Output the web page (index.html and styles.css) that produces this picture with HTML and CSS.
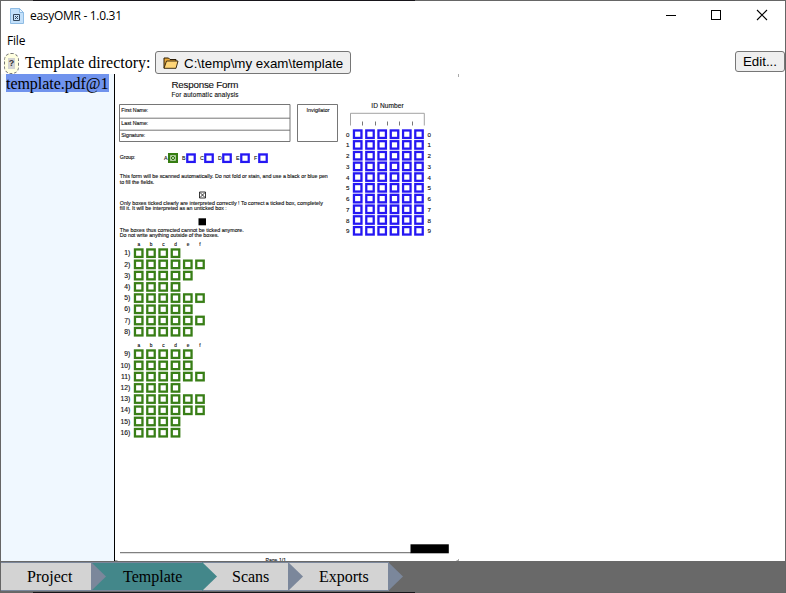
FILE: index.html
```
<!DOCTYPE html>
<html lang="en">
<head>
<meta charset="utf-8">
<title>easyOMR - 1.0.31</title>
<link rel="stylesheet" href="styles.css">
</head>
<body>
<div class="window">
  <header class="titlebar">
    <svg class="app-icon" width="14" height="16" viewBox="0 0 14 16">
      <path d="M.5.5h9l4 4v11H.5z" fill="#c3e0fa" stroke="#8fbce4"/>
      <path d="M9.500.500v4h4z" fill="#e8f4ff" stroke="#8fbce4"/>
      <path d="M3.500 6.500h6v6h-6zM5 8l3 3M8 8l-3 3" fill="none" stroke="#35465a"/>
    </svg>
    <span class="title">easyOMR - 1.0.31</span>
    <svg class="controls" width="102" height="12" viewBox="0 0 102 12" fill="none" stroke="#000">
      <path d="M0 6.500h10M45.500 1.500h9v9h-9z" shape-rendering="crispEdges"/>
      <path d="M91 1l10 10M101 1L91 11" stroke-width="1.100"/>
    </svg>
  </header>
  <nav class="menubar">File</nav>
  <div class="toolbar">
    <span class="help"><b>?</b></span>
    <span class="dir-label">Template directory:</span>
    <button class="dir-button">
      <svg width="16" height="12" viewBox="0 0 16 12">
        <path d="M1 11V1h4.500l1.500 1.500h6V5" fill="#e9a93b" stroke="#2b1c05"/>
        <path d="M1 11.300L3.500 4H15l-2 7.300z" fill="#ffd678" stroke="#2b1c05" stroke-width=".9"/>
      </svg>
      <span>C:\temp\my exam\template</span>
    </button>
    <button class="edit-button">Edit...</button>
  </div>
  <main class="content">
    <aside class="sidebar"><span class="selected">template.pdf@1</span></aside>
    <section class="preview">
      <svg class="sheet" width="345" height="487" viewBox="115 74 345 487">
        <defs>
          <g id="box"><rect width="10" height="10" class="halo"/><rect x="1.300" y="1.300" width="7.400" height="7.400" class="frame"/></g>
          <g id="r4"><use href="#box"/><use href="#box" x="12.300"/><use href="#box" x="24.500"/><use href="#box" x="36.800"/></g>
          <g id="r5"><use href="#r4"/><use href="#box" x="49.100"/></g>
          <g id="r6"><use href="#r5"/><use href="#box" x="61.300"/></g>
        </defs>
        <text x="171.500" y="87.700" font-size="9.800" textLength="67">Response Form</text>
        <text x="171.500" y="97" font-size="6.300" textLength="67">For automatic analysis</text>
        <g class="lines">
          <path d="M119.500 104.500H290V141.500H119.500zM119.500 118.200H290M119.500 130.200H290M297.500 104.500h40v37h-40z"/>
          <path d="M350.500 125.500v-12.200h73.800v12.200" stroke="#999"/>
          <path d="M362.500 121.500v4M375.500 121.500v4M387.500 121.500v4M399.500 121.500v4M412.500 121.500v4"/>
        </g>
        <g font-size="5.300">
          <text x="121.300" y="112.200" textLength="27">First Name:</text>
          <text x="121.300" y="124.700" textLength="27">Last Name:</text>
          <text x="121.300" y="137.200" textLength="24">Signature:</text>
          <text x="306.500" y="112.200" textLength="23">Invigilator</text>
          <text x="119.800" y="159" textLength="15.500">Group:</text>
          <text x="164" y="160">A</text><text x="182" y="160">B</text><text x="200" y="160">C</text><text x="218" y="160">D</text><text x="236" y="160">E</text><text x="254" y="160">F</text>
          <text x="119.800" y="178.300" textLength="208">This form will be scanned automatically. Do not fold or stain, and use a black or blue pen</text>
          <text x="119.800" y="183.500" textLength="34.500">to fill the fields.</text>
          <text x="119.800" y="205" textLength="203">Only boxes ticked clearly are interpreted correctly ! To correct a ticked box, completely</text>
          <text x="119.800" y="210.300" textLength="107">fill it. It will be interpreted as an unticked box :</text>
          <text x="119.800" y="232" textLength="124">The boxes thus corrected cannot be ticked anymore.</text>
          <text x="119.800" y="237.300" textLength="99">Do not write anything outside of the boxes.</text>
        </g>
        <text x="371.300" y="107.500" font-size="6.600" textLength="32.500">ID Number</text>
        <rect x="168" y="153" width="10" height="10" fill="#367d12"/>
        <path d="M170.500 155.500h5v5h-5zM171 156l4 4M175 156l-4 4" fill="none" stroke="#dce8d7" stroke-width=".7"/>
        <g class="blue">
          <use href="#box" x="186" y="153.200"/><use href="#box" x="204" y="153.200"/><use href="#box" x="222" y="153.200"/><use href="#box" x="240" y="153.200"/><use href="#box" x="258" y="153.200"/>
          <use href="#r6" x="352.700" y="129.200"/><use href="#r6" x="352.700" y="139.900"/><use href="#r6" x="352.700" y="150.700"/><use href="#r6" x="352.700" y="161.400"/><use href="#r6" x="352.700" y="172.100"/>
          <use href="#r6" x="352.700" y="182.800"/><use href="#r6" x="352.700" y="193.600"/><use href="#r6" x="352.700" y="204.300"/><use href="#r6" x="352.700" y="215"/><use href="#r6" x="352.700" y="225.800"/>
        </g>
        <g class="digits">
          <text x="346" y="136.700">0</text><text x="346" y="147.400">1</text><text x="346" y="158.200">2</text><text x="346" y="168.900">3</text><text x="346" y="179.600">4</text><text x="346" y="190.300">5</text><text x="346" y="201.100">6</text><text x="346" y="211.800">7</text><text x="346" y="222.500">8</text><text x="346" y="233.300">9</text>
          <text x="427.500" y="136.700">0</text><text x="427.500" y="147.400">1</text><text x="427.500" y="158.200">2</text><text x="427.500" y="168.900">3</text><text x="427.500" y="179.600">4</text><text x="427.500" y="190.300">5</text><text x="427.500" y="201.100">6</text><text x="427.500" y="211.800">7</text><text x="427.500" y="222.500">8</text><text x="427.500" y="233.300">9</text>
        </g>
        <path d="M199.500 192h6v6h-6zM200 192.500l5 5M205 192.500l-5 5" fill="none" stroke="#222" stroke-width=".9"/>
        <rect x="198.500" y="218.300" width="7.500" height="7" fill="#000"/>
        <g class="letters">
          <text x="138.800" y="246.300">a</text><text x="151" y="246.300">b</text><text x="163.500" y="246.300">c</text><text x="175.700" y="246.300">d</text><text x="188" y="246.300">e</text><text x="200" y="246.300">f</text>
          <text x="138.800" y="347.300">a</text><text x="151" y="347.300">b</text><text x="163.500" y="347.300">c</text><text x="175.700" y="347.300">d</text><text x="188" y="347.300">e</text><text x="200" y="347.300">f</text>
        </g>
        <g class="green">
          <use href="#r4" x="133.700" y="248.200"/><use href="#r6" x="133.700" y="259.400"/><use href="#r5" x="133.700" y="270.600"/><use href="#r4" x="133.700" y="281.900"/><use href="#r6" x="133.700" y="293.100"/><use href="#r5" x="133.700" y="304.300"/><use href="#r6" x="133.700" y="315.500"/><use href="#r5" x="133.700" y="326.700"/>
          <use href="#r5" x="133.700" y="349.200"/><use href="#r5" x="133.700" y="360.400"/><use href="#r6" x="133.700" y="371.600"/><use href="#r4" x="133.700" y="382.900"/><use href="#r6" x="133.700" y="394.100"/><use href="#r6" x="133.700" y="405.300"/><use href="#r4" x="133.700" y="416.500"/><use href="#r4" x="133.700" y="427.700"/>
        </g>
        <g class="numbers">
          <text x="130.300" y="255.300">1)</text><text x="130.300" y="266.500">2)</text><text x="130.300" y="277.700">3)</text><text x="130.300" y="289">4)</text><text x="130.300" y="300.200">5)</text><text x="130.300" y="311.400">6)</text><text x="130.300" y="322.600">7)</text><text x="130.300" y="333.800">8)</text>
          <text x="130.300" y="356.300">9)</text><text x="130.300" y="367.500">10)</text><text x="130.300" y="378.700">11)</text><text x="130.300" y="390">12)</text><text x="130.300" y="401.200">13)</text><text x="130.300" y="412.400">14)</text><text x="130.300" y="423.600">15)</text><text x="130.300" y="434.800">16)</text>
        </g>
        <path d="M120 552.700h291" stroke="#808080" stroke-width="1.300"/>
        <rect x="410.500" y="544.300" width="38.300" height="9" fill="#000"/>
        <text x="265.500" y="561.500" font-size="5" textLength="20.500">Page 1/1</text>
        <path d="M458.500 74v3M456.500 560.500h2.500M458.500 559v2M115 560.500h2.500" stroke="#aaa"/>
      </svg>
    </section>
  </main>
  <nav class="steps">
    <a class="step project">Project</a>
    <a class="step template active">Template</a>
    <a class="step scans">Scans</a>
    <a class="step exports">Exports</a>
  </nav>
</div>
</body>
</html>
```
FILE: styles.css
```
* { box-sizing: border-box; }
body { margin: 0; background: #fff; color: #000; }
.window {
  width: 786px; height: 593px; overflow: hidden;
  display: flex; flex-direction: column;
  border: 1px solid #696969;
  border-image: linear-gradient(90deg, #666 0 33px, #17151a 33px 415px, #666 415px) 1;
  border-image-width: 1px;
}
.titlebar { height: 30px; display: flex; align-items: center; padding: 0 17px 2px 9px; }
.app-icon { margin-top: 1px; }
.title { margin-left: 6px; font: 12px "Open Sans", sans-serif; letter-spacing: -.3px; flex: 1; }
.menubar { height: 20px; padding: 2px 0 0 6px; font: 12px/16px "Open Sans", sans-serif; letter-spacing: -.2px; }
.toolbar { height: 23px; display: flex; align-items: flex-start; }
.help {
  width: 15px; height: 21px; margin: 2px 0 0 3px; padding: 4px 3px;
  border: 1px dashed #777; border-radius: 7px; background: #ffffe0;
}
.help b { display: block; height: 11px; background: #d3d3d3; font: bold 9px/11px "Liberation Sans", sans-serif; text-align: center; color: #333; }
.dir-label { margin-left: 6px; width: 130px; font: 16px/24px "Liberation Serif", serif; white-space: nowrap; }
button {
  border: 1px solid #767676; border-radius: 3px; background: #efefef;
  font: 13.33px "Liberation Sans", sans-serif; color: #000; padding: 0; white-space: nowrap;
}
.dir-button { width: 196px; height: 23px; padding: 1px 0 0 7px; display: flex; align-items: center; gap: 5px; }
.edit-button { width: 50px; height: 21px; margin-left: auto; }
.content { height: 487px; display: flex; }
.sidebar { width: 114px; background: #f0f8ff; border-right: 1px solid #000; padding-left: 5px; }
.selected { display: block; width: 103px; height: 18px; background: #7093ed; font: 16px/19px "Liberation Serif", serif; letter-spacing: -.05px; white-space: nowrap; }
.preview { flex: 1; background: #fff; }
.sheet { display: block; font-family: "Liberation Sans", sans-serif; }
.sheet text { fill: #111; stroke: #111; stroke-width: .12px; }
.halo { fill: currentColor; opacity: .3; }
.frame { fill: #fff; stroke: currentColor; stroke-width: 2.2; }
.blue { color: #2517f3; }
.green { color: #387e16; }
.lines { fill: none; stroke: #666; stroke-width: .9; }
.digits { font-size: 6.2px; }
.numbers { font-size: 6.8px; text-anchor: end; }
.letters { font-size: 4.8px; text-anchor: middle; }
.steps { height: 31px; background: #696969; padding: 1px 0; display: flex; }
.step {
  position: relative; height: 29px; background: #d3d3d3;
  border: solid #7b879b; border-width: 1px 1px 1px 0;
  font: 16px/28px "Liberation Serif", serif; white-space: nowrap;
}
.step::after {
  content: ""; position: absolute; z-index: 1; left: 100%; top: -1px;
  width: 15px; height: 29px; background: #7b879b;
  clip-path: polygon(0 0, 100% 50%, 0 100%);
}
.project { width: 91px; padding-left: 26px; }
.template { width: 111px; padding-left: 31px; }
.scans { width: 86px; padding-left: 29px; }
.exports { width: 100px; padding-left: 30px; }
.active { background: #43878a; border-color: #7b879b #43878a; }
.active::after { background: #43878a; }
```
